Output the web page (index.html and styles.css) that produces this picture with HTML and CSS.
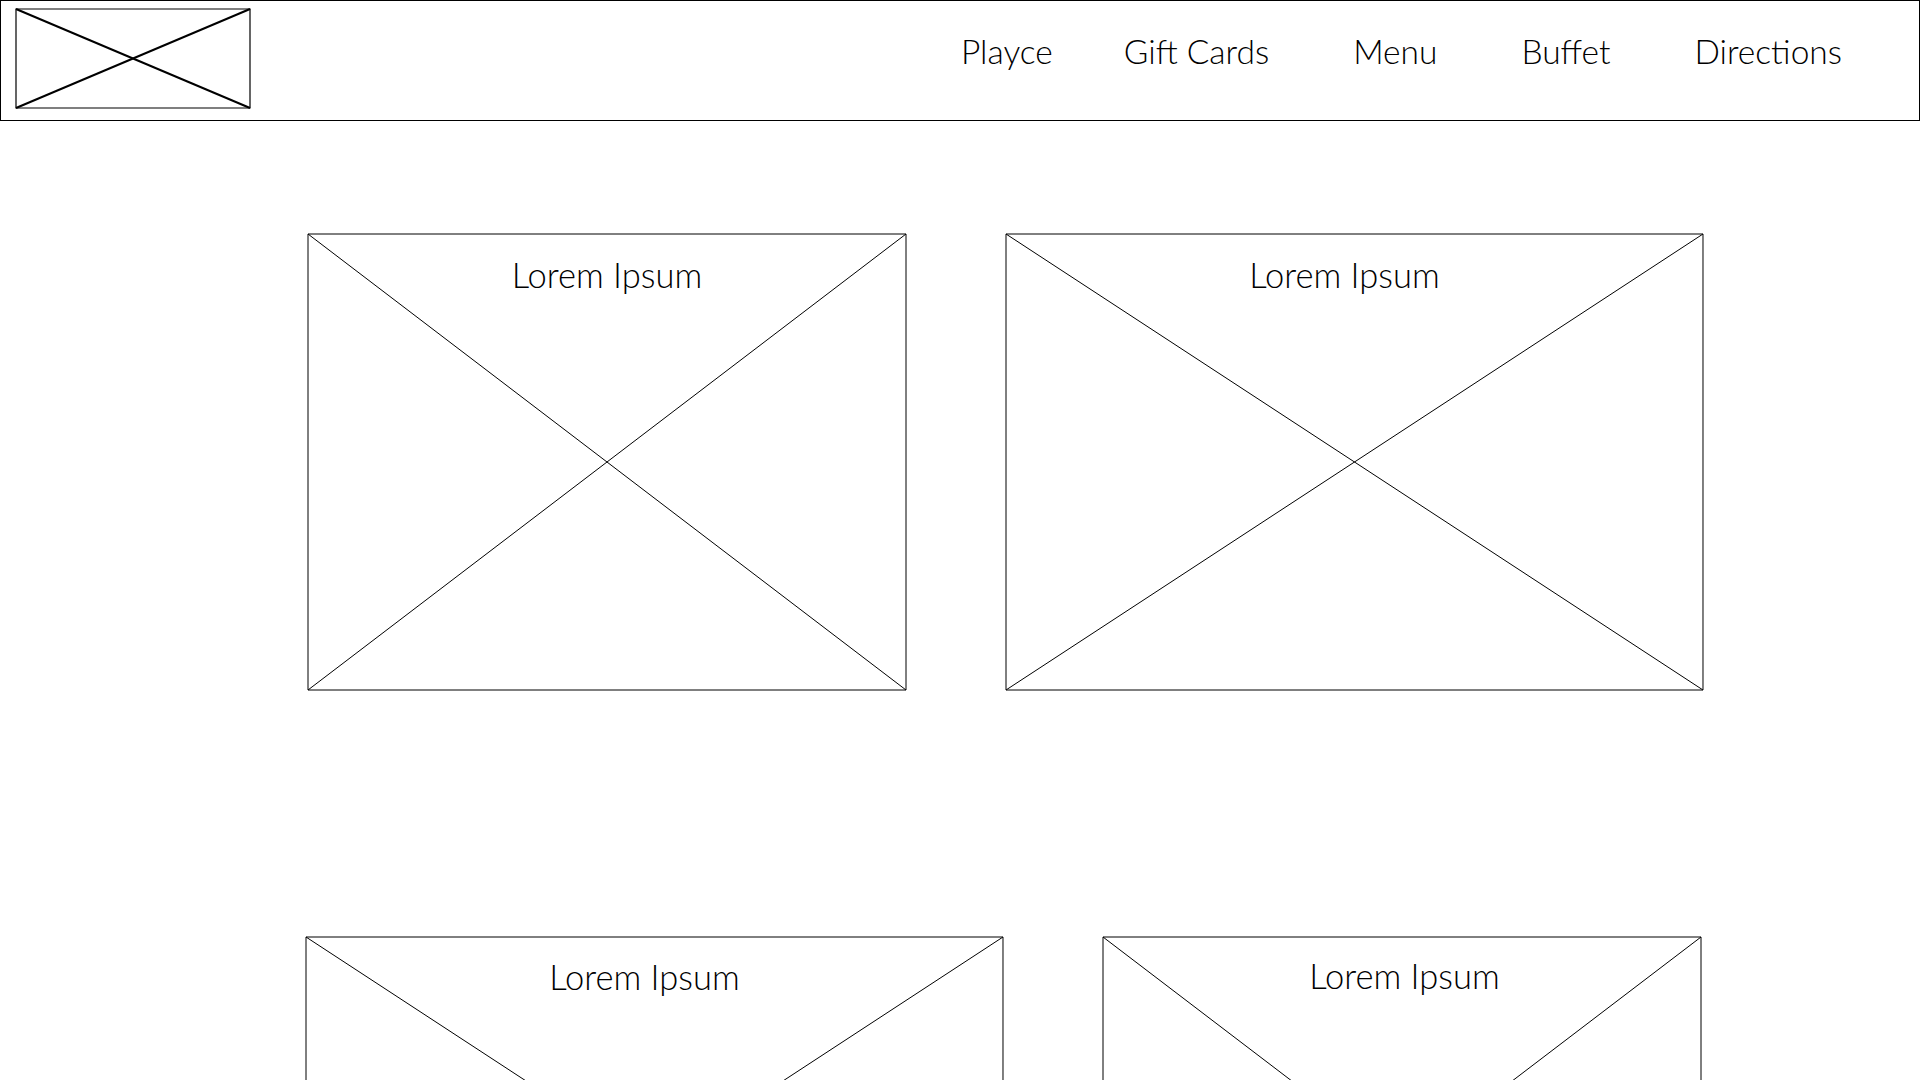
FILE: index.html
```html
<!DOCTYPE html>
<html lang="en">
<head>
<meta charset="utf-8">
<title>Playce</title>
<link rel="stylesheet" href="styles.css">
</head>
<body>
<header class="site-header">
  <div class="logo">
    <svg class="xbox" viewBox="0 0 100 100" preserveAspectRatio="none">
      <rect x="0" y="0" width="100" height="100" fill="none" stroke="#000" stroke-width="1.2" vector-effect="non-scaling-stroke"/>
      <line x1="0" y1="0" x2="100" y2="100" stroke="#000" stroke-width="2" vector-effect="non-scaling-stroke"/>
      <line x1="0" y1="100" x2="100" y2="0" stroke="#000" stroke-width="2" vector-effect="non-scaling-stroke"/>
    </svg>
  </div>
  <nav class="nav">
    <a class="nav-link nav-first">Playce</a>
    <a class="nav-link">Gift Cards</a>
    <a class="nav-link">Menu</a>
    <a class="nav-link">Buffet</a>
    <a class="nav-link">Directions</a>
  </nav>
</header>
<main class="content">
  <div class="row row-a">
    <div class="card card-s">
      <svg class="xbox" viewBox="0 0 100 100" preserveAspectRatio="none">
        <rect x="0" y="0" width="100" height="100" fill="none" stroke="#000" stroke-width="1" vector-effect="non-scaling-stroke"/>
        <line x1="0" y1="0" x2="100" y2="100" stroke="#000" stroke-width="1" vector-effect="non-scaling-stroke"/>
        <line x1="0" y1="100" x2="100" y2="0" stroke="#000" stroke-width="1" vector-effect="non-scaling-stroke"/>
      </svg>
      <h2 class="card-title">Lorem Ipsum</h2>
    </div>
    <div class="card card-l">
      <svg class="xbox" viewBox="0 0 100 100" preserveAspectRatio="none">
        <rect x="0" y="0" width="100" height="100" fill="none" stroke="#000" stroke-width="1" vector-effect="non-scaling-stroke"/>
        <line x1="0" y1="0" x2="100" y2="100" stroke="#000" stroke-width="1" vector-effect="non-scaling-stroke"/>
        <line x1="0" y1="100" x2="100" y2="0" stroke="#000" stroke-width="1" vector-effect="non-scaling-stroke"/>
      </svg>
      <h2 class="card-title card-title-l">Lorem Ipsum</h2>
    </div>
  </div>
  <div class="row row-b">
    <div class="card card-l">
      <svg class="xbox" viewBox="0 0 100 100" preserveAspectRatio="none">
        <rect x="0" y="0" width="100" height="100" fill="none" stroke="#000" stroke-width="1" vector-effect="non-scaling-stroke"/>
        <line x1="0" y1="0" x2="100" y2="100" stroke="#000" stroke-width="1" vector-effect="non-scaling-stroke"/>
        <line x1="0" y1="100" x2="100" y2="0" stroke="#000" stroke-width="1" vector-effect="non-scaling-stroke"/>
      </svg>
      <h2 class="card-title card-title-l">Lorem Ipsum</h2>
    </div>
    <div class="card card-s">
      <svg class="xbox" viewBox="0 0 100 100" preserveAspectRatio="none">
        <rect x="0" y="0" width="100" height="100" fill="none" stroke="#000" stroke-width="1" vector-effect="non-scaling-stroke"/>
        <line x1="0" y1="0" x2="100" y2="100" stroke="#000" stroke-width="1" vector-effect="non-scaling-stroke"/>
        <line x1="0" y1="100" x2="100" y2="0" stroke="#000" stroke-width="1" vector-effect="non-scaling-stroke"/>
      </svg>
      <h2 class="card-title card-title-r">Lorem Ipsum</h2>
    </div>
  </div>
</main>
</body>
</html>
```
FILE: styles.css
```css
html, body {
  margin: 0;
  padding: 0;
  background: #fff;
}
body {
  font-family: Lato, "Open Sans", "Liberation Sans", sans-serif;
  font-weight: 300;
  color: #000;
}
.site-header {
  box-sizing: border-box;
  height: 121px;
  border: 1px solid #000;
  display: flex;
  align-items: flex-start;
  justify-content: space-between;
  padding: 8px 77px 0 15px;
}
.logo {
  position: relative;
  width: 234px;
  height: 99px;
}
.xbox {
  position: absolute;
  left: 0;
  top: 0;
  width: 100%;
  height: 100%;
  display: block;
  overflow: visible;
}
.nav {
  display: flex;
  gap: 84px;
  padding-top: 22px;
}
.nav-first {
  margin-right: -13px;
}
.nav-link {
  font-size: 33.5px;
  line-height: 40px;
  color: #000;
  white-space: nowrap;
}
.content {
  padding-top: 113px;
}
.row {
  display: flex;
  gap: 100px;
}
.row-a {
  padding-left: 308px;
  margin-bottom: 247px;
}
.row-b {
  padding-left: 306px;
}
.card {
  position: relative;
  height: 456px;
  box-sizing: border-box;
}
.card-s {
  width: 598px;
}
.card-l {
  width: 697px;
}
.card-title {
  position: relative;
  margin: 0;
  padding-top: 21px;
  font-size: 34.5px;
  line-height: 40px;
  font-weight: 300;
  text-align: center;
}
.card-title-l {
  padding-right: 20px;
}
.card-title-r {
  padding-left: 5px;
}
.row-b .card-title {
  padding-top: 20px;
}
.row-b .card-s .card-title {
  padding-top: 19px;
}
```
